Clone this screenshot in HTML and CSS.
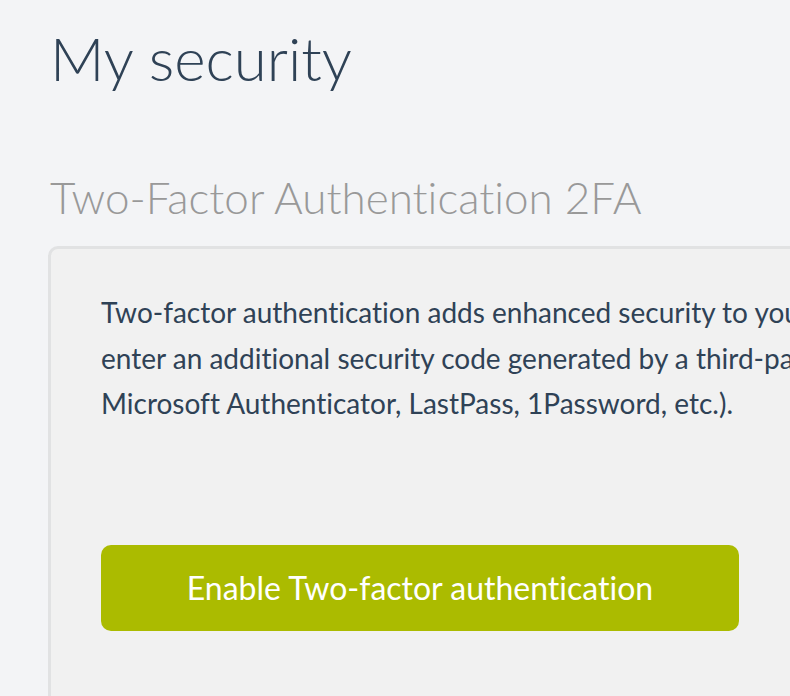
FILE: index.html
```html
<!DOCTYPE html>
<html lang="en">
<head>
    <meta charset="UTF-8">
    <meta name="viewport" content="width=device-width, initial-scale=1.0">
    <title>My security</title>
    <link rel="stylesheet" href="styles.css">
</head>
<body>
    <div class="page">
        <h1 class="title">My security</h1>
        <h2 class="section-title">Two-Factor Authentication 2FA</h2>
        <div class="card">
            <p class="intro">
                Two-factor authentication adds enhanced security to your account. When signing in you will need to<br>
                enter an additional security code generated by a third-party app (Google Authenticator, Authy,<br>
                Microsoft Authenticator, LastPass, 1Password, etc.).
            </p>
            <button class="btn-enable">Enable Two-factor authentication</button>
        </div>
    </div>
</body>
</html>
```

FILE: styles.css
```css
html, body {
    margin: 0;
    padding: 0;
    overflow: hidden;
}
body {
    background-color: #f3f4f6;
    font-family: Lato, "Open Sans", sans-serif;
    font-variant-ligatures: no-common-ligatures;
    color: #2f4256;
    height: 696px;
}
.page {
    width: 1300px;
    padding: 22px 0 0 50px;
}
.title {
    margin: 0;
    font-size: 60px;
    font-weight: 300;
    line-height: 72px;
    color: #2f4256;
}
.section-title {
    margin: 77px 0 0 0;
    font-size: 44px;
    font-weight: 300;
    line-height: 52px;
    color: #999999;
}
.card {
    margin: 23px 0 0 -2px;
    background-color: #f1f1f1;
    border: 3px solid #e1e2e3;
    border-radius: 10px;
    padding: 41px 50px 200px 50px;
}
.intro {
    margin: 0;
    font-size: 28px;
    line-height: 45.5px;
    white-space: nowrap;
}
.btn-enable {
    display: block;
    margin-top: 118px;
    width: 638px;
    height: 86px;
    border: none;
    border-radius: 10px;
    background-color: #abbb00;
    color: #ffffff;
    font-family: Lato, "Open Sans", sans-serif;
    font-variant-ligatures: no-common-ligatures;
    font-size: 32px;
    cursor: pointer;
}
```
